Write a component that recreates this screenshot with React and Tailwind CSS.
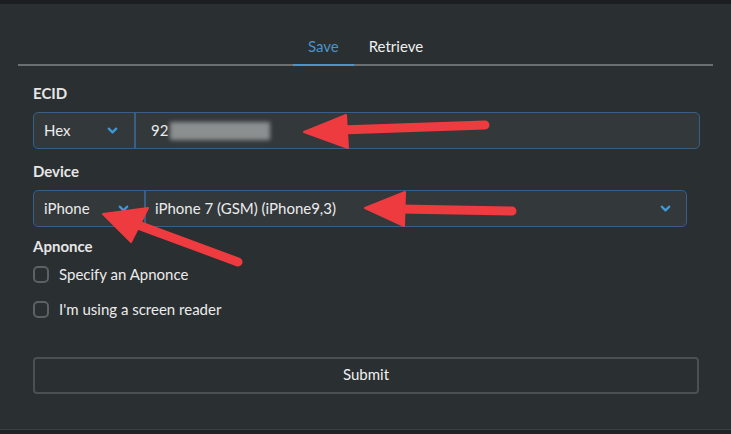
import { ChevronDown } from "lucide-react";

function Chevron({ className = "" }) {
  return (
    <ChevronDown size={15} strokeWidth={3.5} className={"text-[#3d9ad6] " + className} />
  );
}

function Arrows() {
  return (
    <svg
      className="absolute inset-0 pointer-events-none"
      width="731"
      height="434"
      viewBox="0 0 731 434"
    >
      <g fill="#ee3b3f" stroke="#ee3b3f" strokeLinecap="round" strokeLinejoin="round">
        {/* ECID arrow */}
        <line x1="485" y1="125" x2="340" y2="130" strokeWidth="9" />
        <polygon points="304,132 346,115 348,148" strokeWidth="2" />
        {/* device arrow */}
        <line x1="512" y1="211" x2="400" y2="209" strokeWidth="9" />
        <polygon points="365,208 405,192 404,226" strokeWidth="2" />
        {/* iPhone arrow */}
        <line x1="238" y1="262" x2="138" y2="225" strokeWidth="9" />
        <polygon points="103,214 148,208 131,242" strokeWidth="2" />
      </g>
    </svg>
  );
}

export default function App() {
  return (
    <main
      className="relative w-[731px] h-[434px] bg-[#1f2325] text-[#ececec] overflow-hidden"
      style={{ fontFamily: "Lato, 'Open Sans', sans-serif" }}
    >
      <div className="h-[4px] bg-[#1c1f21]" />
      <div className="h-[426px] bg-[#2a2f31] pt-[28px] px-[18px] border-b border-[#3a3f41]">
        {/* Tabs */}
        <div className="flex justify-center border-b-2 border-[#6b6f70]">
          <button className="px-[15px] pb-[7px] pt-[3px] text-[15px] leading-[22px] text-[#4b93c9] border-b-2 border-[#4b93c9] -mb-[2px]">
            Save
          </button>
          <button className="px-[15px] pb-[7px] pt-[3px] text-[15px] leading-[22px] text-[#f0f0f0]">
            Retrieve
          </button>
        </div>

        <div className="px-[15px] pt-[17px]">
          {/* ECID */}
          <div className="text-[15px] font-bold leading-[20px] text-[#e6e6e6]">ECID</div>
          <div className="mt-[9px] flex h-[37px] w-[667px] rounded-[5px] border border-[#3a5f87] bg-[#33383b]">
            <div className="flex w-[102px] items-center justify-between pl-[10px] pr-[14px] border-r-2 border-[#3a5f87]">
              <span className="text-[15px]">Hex</span>
              <Chevron />
            </div>
            <div className="flex items-center pl-[15px] text-[15px]">
              <span>92</span>
              <span className="ml-[2px] h-[18px] w-[100px] bg-[#8c8f90] blur-[2px]" />
            </div>
          </div>

          {/* Device */}
          <div className="mt-[12px] text-[15px] font-bold leading-[20px] text-[#e6e6e6]">Device</div>
          <div className="mt-[9px] flex h-[37px] w-[654px] rounded-[5px] border border-[#3a5f87] bg-[#33383b]">
            <div className="flex w-[112px] items-center justify-between pl-[10px] pr-[13px] border-r-2 border-[#3a5f87]">
              <span className="text-[15px]">iPhone</span>
              <Chevron />
            </div>
            <div className="flex flex-1 items-center justify-between pl-[9px] pr-[13px]">
              <span className="text-[15px]">iPhone 7 (GSM) (iPhone9,3)</span>
              <Chevron />
            </div>
          </div>

          {/* Apnonce */}
          <div className="mt-[9px] text-[15px] font-bold leading-[20px] text-[#e6e6e6]">Apnonce</div>
          <label className="mt-[8px] flex items-center gap-[10px]">
            <span className="h-[17px] w-[16px] rounded-[5px] border-2 border-[#5c6163]" />
            <span className="text-[15px] leading-[20px]">Specify an Apnonce</span>
          </label>
          <label className="mt-[15px] flex items-center gap-[10px]">
            <span className="h-[17px] w-[16px] rounded-[5px] border-2 border-[#5c6163]" />
            <span className="text-[15px] leading-[20px]">I'm using a screen reader</span>
          </label>

          {/* Submit */}
          <button className="mt-[38px] flex h-[37px] w-[666px] items-center justify-center rounded-[4px] border-2 border-[#4b5153] pb-[2px] text-[15px] text-[#f0f0f0]">
            Submit
          </button>
        </div>
      </div>
      <Arrows />
    </main>
  );
}
